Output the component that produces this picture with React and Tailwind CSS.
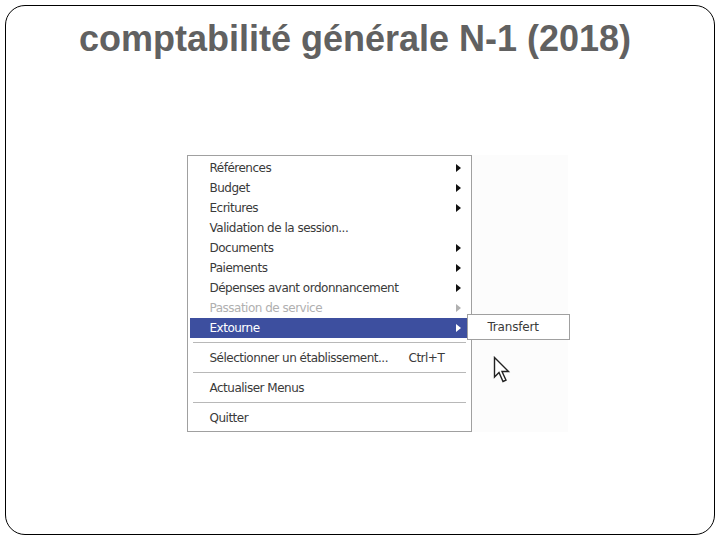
const items = [
  { label: "Références", arrow: true },
  { label: "Budget", arrow: true },
  { label: "Ecritures", arrow: true },
  { label: "Validation de la session..." },
  { label: "Documents", arrow: true },
  { label: "Paiements", arrow: true },
  { label: "Dépenses avant ordonnancement", arrow: true },
  { label: "Passation de service", arrow: true, disabled: true },
  { label: "Extourne", arrow: true, active: true },
];

function Arrow({ color }) {
  return (
    <svg width="5" height="8" viewBox="0 0 5 8" className="shrink-0">
      <path d="M0 0 L5 4 L0 8 Z" fill={color} />
    </svg>
  );
}

function Separator() {
  return (
    <div className="mx-[3px] my-[4px] h-[2px] border-t border-[#b8b8b8] border-b border-b-white" />
  );
}

export default function App() {
  return (
    <div className="w-[720px] h-[540px] bg-white p-[5px]" style={{ fontFamily: "'Liberation Sans', Arial, sans-serif" }}>
      <div className="w-full h-full border border-black rounded-[20px] flex flex-col items-center">
        <h1 className="mt-[11px] ml-[-10px] text-[36px] leading-[44px] font-bold text-[#616161]">
          comptabilité générale N-1 (2018)
        </h1>

        <div className="mt-[94px] ml-[34px] flex items-start">
          {/* menu */}
          <div
            className="w-[285px] border border-[#a0a0a0] bg-white pt-[2px] pb-[3px] px-[2px] text-[12px] text-[#3a3a3a]"
            style={{ fontFamily: "Tahoma, 'DejaVu Sans', sans-serif" }}
          >
            {items.map((it) => (
              <div
                key={it.label}
                className={`h-[20px] flex items-center justify-between pl-[20px] pr-[8px] ${
                  it.active ? "bg-[#3d4f9f] text-white" : it.disabled ? "text-[#b0b0b0]" : ""
                }`}
              >
                <span className="tracking-[-0.5px]">{it.label}</span>
                {it.arrow && (
                  <Arrow color={it.active ? "#ffffff" : it.disabled ? "#b0b0b0" : "#111"} />
                )}
              </div>
            ))}
            <Separator />
            <div className="h-[20px] flex items-center pl-[20px] pr-[8px]">
              <span className="tracking-[-0.5px] w-[199px]">Sélectionner un établissement...</span>
              <span className="tracking-[-0.5px]">Ctrl+T</span>
            </div>
            <Separator />
            <div className="h-[20px] flex items-center pl-[20px] tracking-[-0.5px]">Actualiser Menus</div>
            <Separator />
            <div className="h-[20px] flex items-center pl-[20px] tracking-[-0.5px]">Quitter</div>
          </div>

          {/* submenu + cursor */}
          <div className="w-[96px] h-[277px] bg-[#fcfcfc] flex flex-col">
            <div
              className="mt-[159px] ml-[-5px] w-[103px] h-[26px] border border-[#a0a0a0] bg-white flex items-center pl-[20px] text-[12px] text-[#3a3a3a] tracking-[-0.2px]"
              style={{ fontFamily: "Tahoma, 'DejaVu Sans', sans-serif" }}
            >
              Transfert
            </div>
            <svg width="18" height="28" viewBox="0 0 18 28" className="mt-[16px] ml-[21px]">
              <path
                d="M1.5 1.5 L1.5 21 L6 16.5 L10 25.5 L13 24.2 L9 15.5 L15.5 15.5 Z"
                fill="white"
                stroke="#222"
                strokeWidth="1.4"
                strokeLinejoin="miter"
              />
            </svg>
          </div>
        </div>
      </div>
    </div>
  );
}
